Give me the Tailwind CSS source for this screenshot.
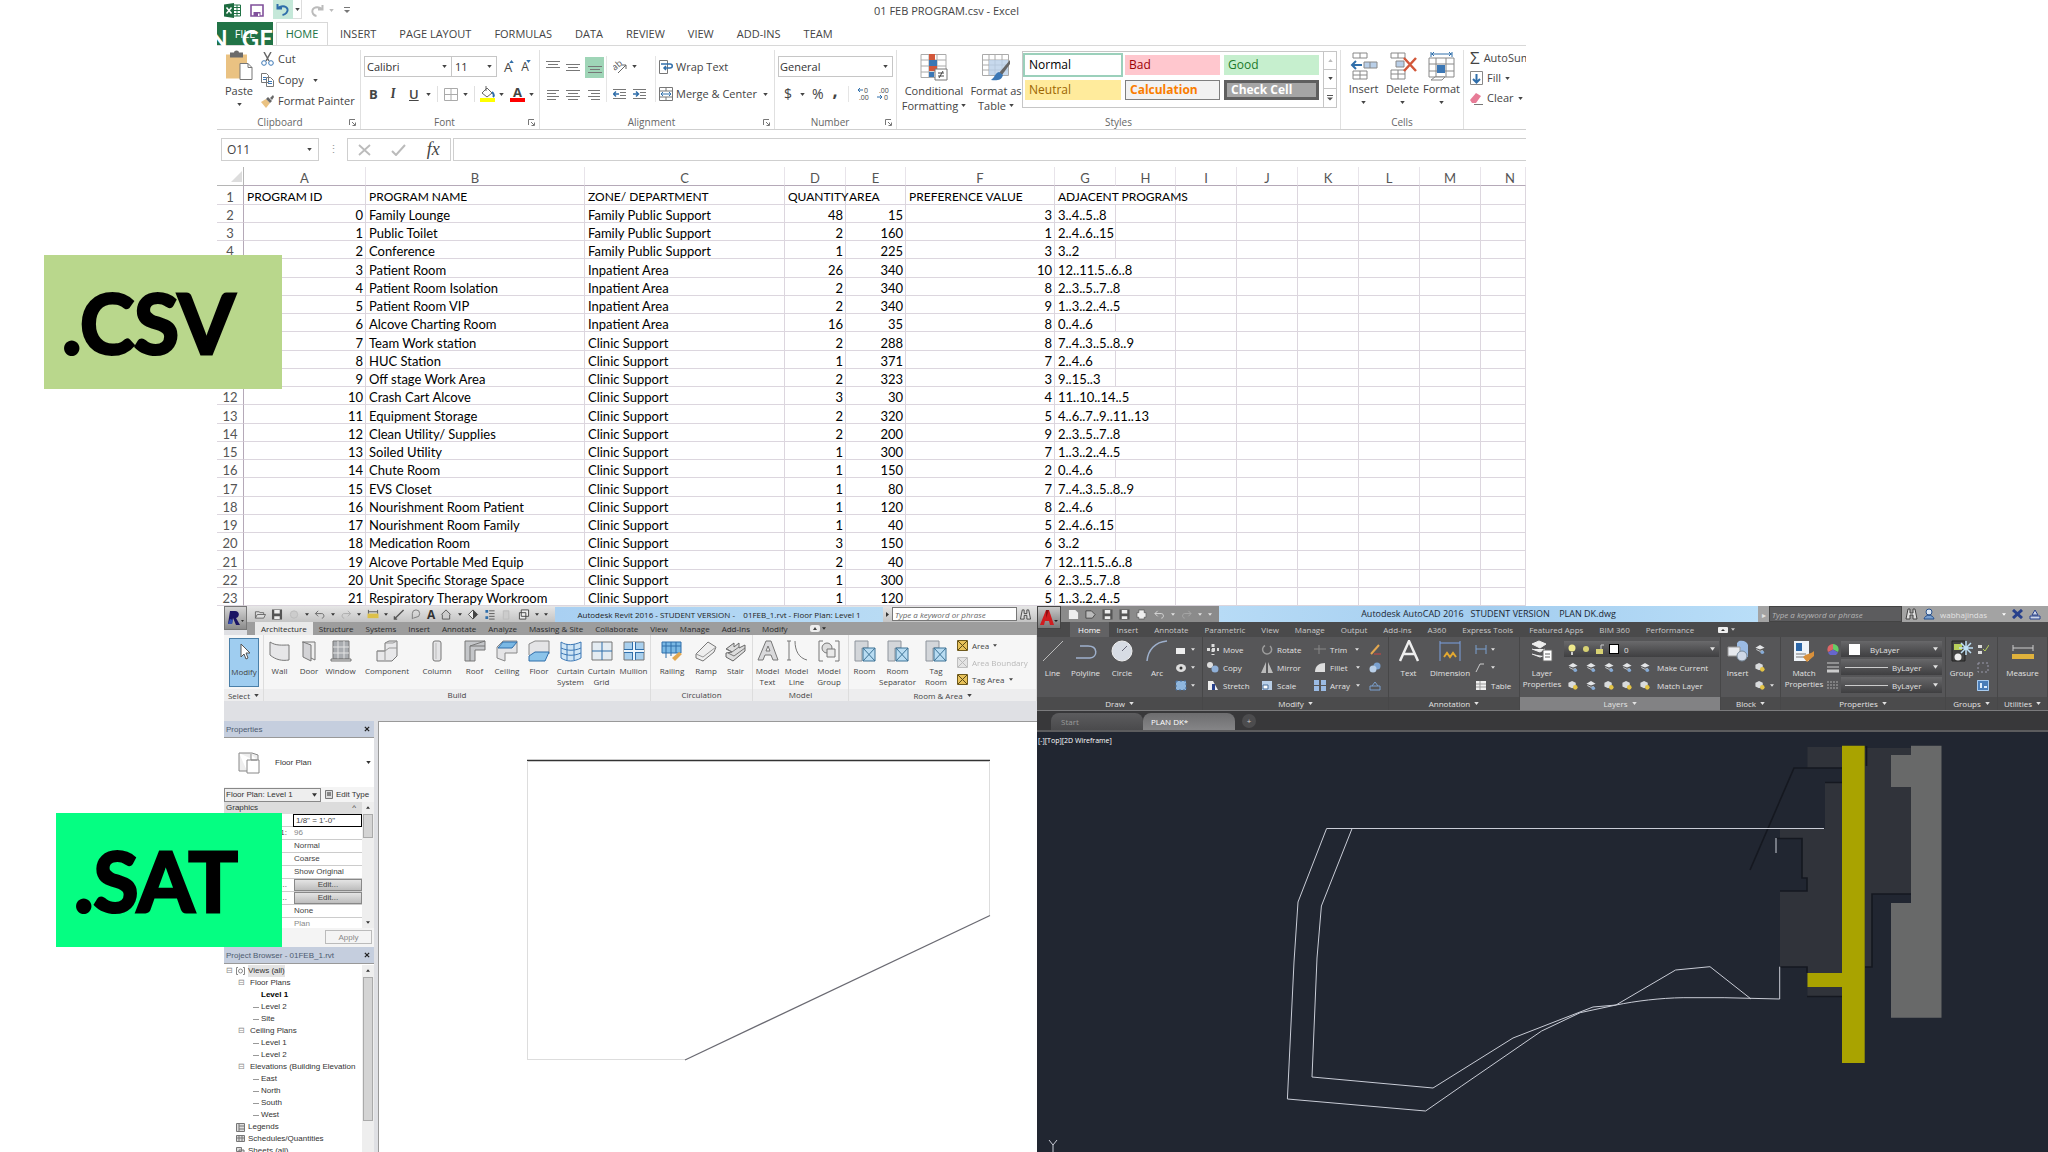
<!DOCTYPE html>
<html lang="en">
<head>
    <meta charset="UTF-8">
    <meta name="viewport" content="width=device-width, initial-scale=1.0">
    <title>Input files</title>
    <script src="https://cdn.jsdelivr.net/npm/@tailwindcss/browser@4"></script>
</head>
<body class="bg-white h-screen overflow-hidden font-['Open_Sans',sans-serif]">

<!-- shared icons -->
<svg class="hidden">
    <symbol id="caret" viewBox="0 0 6 4"><path d="M0 0h6L3 4z" fill="currentColor"/></symbol>
    <symbol id="launch" viewBox="0 0 7 7"><path d="M.5 6V.5H6M3 3l3 3M6.5 3.5v3h-3" fill="none" stroke="#777"/></symbol>
    <symbol id="lines" viewBox="0 0 14 12"><path d="M0 1.5h14M2 4.5h10M0 7.5h14M2 10.5h10" stroke="#777" fill="none"/></symbol>
    <symbol id="left" viewBox="0 0 14 12"><path d="M1 1.5h12M1 4.5h9M1 7.5h12M1 10.5h9" stroke="#777" fill="none"/></symbol>
    <symbol id="right" viewBox="0 0 14 12"><path d="M1 1.5h12M4 4.5h9M1 7.5h12M4 10.5h9" stroke="#777" fill="none"/></symbol>
    <symbol id="three" viewBox="0 0 14 12"><path d="M0 2.5h14M2 5.5h10M0 8.5h14" stroke="#777" fill="none"/></symbol>
    <symbol id="xroom" viewBox="0 0 22 22"><path d="M1 1h13v7H8v13H1z" fill="#d3d6da" stroke="#8e949c"/><path d="M9 8h12v13H9zM9 8l12 13M21 8L9 21" fill="#b9dcf2" stroke="#3d7396"/></symbol>
    <symbol id="xarea" viewBox="0 0 11 11"><path d="M.5.5h10v10H.5z" fill="#e8c25a" stroke="#6f5a1c"/><path d="M1 1l9 9M10 1l-9 9" stroke="#5c4a17"/></symbol>
    <symbol id="layer" viewBox="0 0 12 12"><path d="M1 4l5-3 5 3-5 2z" fill="#e4e6e8"/><path d="M2 6l4 2 3-1" fill="none" stroke="#cfd2d5"/><circle cx="8.500" cy="9" r="2" fill="#86abd6"/></symbol>
    <symbol id="layery" viewBox="0 0 12 12"><path d="M1 3l4-2 4 2v4L5 9 1 7z" fill="#d9dbdd"/><circle cx="8.500" cy="8" r="2.500" fill="#e3c345"/></symbol>
    <symbol id="bino" viewBox="0 0 13 12"><path d="M3 1h2v4h3V1h2l2 10H8V7H5v4H1z" fill="#ddd" stroke="#444"/></symbol>
    <symbol id="disk" viewBox="0 0 12 12"><path d="M.5.5h11v11H.5z" fill="#555"/><path d="M3 1h6v4H3zM3 8h6v3H3z" fill="#eee"/></symbol>
    <symbol id="close" viewBox="0 0 7 7"><path d="M1 1l5 5M6 1L1 6" stroke="#222" stroke-width="1.500"/></symbol>
</svg>

<main class="flex flex-col h-full">

<!-- ================= Excel ================= -->
<section class="ml-[217px] mr-[522px] shrink-0 overflow-hidden text-[11px] text-[#444]">
    <div class="flex items-center h-[22px] relative pl-[7px] pb-[2px]">
        <svg class="w-[17px] h-[15px]" viewBox="0 0 17 15"><path d="M9 2h7.500v11H9z" fill="#fff" stroke="#217346"/><path d="M10 4.500h6M10 7.500h6M10 10.500h6M13 2v11" stroke="#217346"/><path d="M0 1.500L10 0v15L0 13.500z" fill="#1d6b40"/><path d="M2.500 4.500l5 6M7.500 4.500l-5 6" stroke="#fff" stroke-width="1.500"/></svg>
        <svg class="w-[14px] h-[13px] ml-[9px]" viewBox="0 0 14 13"><path d="M1 1h12v11H1z" fill="#fff" stroke="#80509b" stroke-width="1.600"/><path d="M3.500 8h7v4h-7z" fill="#80509b"/><path d="M8 9.500h1.500V12H8z" fill="#fff"/></svg>
        <button class="ml-[9px] w-[20px] h-[19px] self-start bg-[#c5e8d9] flex items-center justify-center" aria-label="Undo"><svg class="w-[14px] h-[13px]" viewBox="0 0 14 13"><path d="M1.500 1v4.500H6M2 5.500C4 2.500 10 2 11.500 6c.8 3-2 5.500-5 6" fill="none" stroke="#2f6eaa" stroke-width="2"/></svg></button>
        <button class="w-[9px] h-[19px] self-start border-r border-b border-[#ddd] flex items-center justify-center" aria-label="Undo list"><svg class="w-[5px] h-[3px]"><use href="#caret"/></svg></button>
        <svg class="w-[14px] h-[13px] ml-[8px]" viewBox="0 0 14 13"><path d="M12.500 1v4.500H8M12 5.500C10 2.500 4 2 2.500 6c-.8 3 1 5.500 4 6" fill="none" stroke="#bbb" stroke-width="2"/></svg>
        <svg class="w-[5px] h-[3px] ml-[5px] text-[#bbb]"><use href="#caret"/></svg>
        <svg class="w-[6px] h-[6px] ml-[10px]" viewBox="0 0 6 6"><path d="M0 .5h6" stroke="#777"/><path d="M0 3h6L3 6z" fill="#777"/></svg>
        <p class="absolute inset-x-0 top-[3px] pl-[150px] text-center leading-4">01 FEB PROGRAM.csv - Excel</p>
    </div>
    <nav class="flex h-[24px] leading-[24px] border-b border-[#d8d8d8] relative">
        <button class="w-[56px] bg-[#217346] text-white">FILE</button>
        <button class="w-[52px] ml-[3px] bg-white border border-b-0 border-[#d8d8d8] text-[#217346] leading-[20px]">HOME</button>
        <div class="flex gap-[23px] ml-[12px] whitespace-nowrap">
            <button>INSERT</button><button>PAGE LAYOUT</button><button>FORMULAS</button><button>DATA</button><button>REVIEW</button><button>VIEW</button><button>ADD-INS</button><button>TEAM</button>
        </div>
        <!-- slide heading running over the green tab -->
        <div class="absolute left-0 top-0 w-[56px] h-[24px] overflow-hidden flex justify-end gap-[14px] text-white font-bold text-[24px] leading-[34px] font-['Lato',sans-serif]"><span>N</span><span>GE</span></div>
    </nav>

    <div class="flex h-[84px] border-b border-[#cfcfcf] pt-1 [&>div]:border-r [&>div]:border-[#e0e0e0] [&>div]:flex [&>div]:flex-col [&>div]:justify-between [&>div]:shrink-0 whitespace-nowrap leading-[14px]">
        <div class="w-[144px]">
            <div class="flex">
                <button class="w-[44px] flex flex-col items-center">
                    <svg class="w-[28px] h-[31px]" viewBox="0 0 28 30"><path d="M1 4h21v24H1z" fill="#eac282"/><path d="M5 2h4a2.500 2 0 0 1 5 0h4v5H5z" fill="#6b6b6b"/><path d="M15 13h8l4 4v12H15z" fill="#fff" stroke="#777"/><path d="M23 13v4h4" fill="none" stroke="#777"/></svg>
                    <span class="mt-[3px]">Paste</span><svg class="w-[5px] h-[3px] mt-[5px]"><use href="#caret"/></svg>
                </button>
                <div class="flex flex-col gap-[7px] pt-[2px]">
                    <button class="flex items-center gap-[4px]"><svg class="w-[13px] h-[14px]" viewBox="0 0 13 14"><path d="M3 0l5 9M10 0L5 9" stroke="#666" stroke-width="1.500"/><circle cx="3" cy="11" r="2.300" fill="none" stroke="#3b77b5"/><circle cx="10" cy="11" r="2.300" fill="none" stroke="#3b77b5"/></svg>Cut</button>
                    <button class="flex items-center gap-[4px]"><svg class="w-[13px] h-[14px]" viewBox="0 0 13 14"><path d="M.5.500h5l2 2v7h-7zM5.500 4.500h4l3 3v6h-7z" fill="#fff" stroke="#777"/><path d="M7 8.500h4M7 10.500h4M2 4.500h3M2 6.500h3" stroke="#3b77b5"/></svg>Copy<svg class="w-[5px] h-[3px] ml-[5px]"><use href="#caret"/></svg></button>
                    <button class="flex items-center gap-[4px]"><svg class="w-[13px] h-[13px]" viewBox="0 0 13 13"><path d="M0 7l5-3 4 4-4 5z" fill="#eac282"/><path d="M5 4l2-2 4 4-2 2zM9 3l3-3 1 2-2 3z" fill="#666"/></svg>Format Painter</button>
                </div>
            </div>
            <p class="text-[10px] text-[#666] flex items-center justify-center"><span class="flex-1 text-center pr-[6px]">Clipboard</span><svg class="w-[7px] h-[7px] mr-[4px]"><use href="#launch"/></svg></p>
        </div>
        <div class="w-[179px]">
            <div class="px-[3px] pt-[6px]">
                <div class="flex items-center">
                    <label class="flex items-center w-[88px] h-[21px] border border-[#c6c6c6] pr-[4px]"><select aria-label="Font" class="appearance-none flex-1 outline-none pl-[2px] text-[#333]"><option>Calibri</option></select><svg class="w-[5px] h-[3px]"><use href="#caret"/></svg></label>
                    <label class="flex items-center w-[45px] h-[21px] border border-l-0 border-[#c6c6c6] pr-[4px]"><select aria-label="Font size" class="appearance-none flex-1 min-w-0 outline-none pl-[3px] text-[#333]"><option>11</option></select><svg class="w-[5px] h-[3px]"><use href="#caret"/></svg></label>
                    <button class="text-[13px] ml-[7px] relative">A<svg class="absolute -right-[2px] top-0 w-[5px] h-[3px] rotate-180 text-[#2f6eaa]"><use href="#caret"/></svg></button>
                    <button class="text-[12px] ml-[9px] relative">A<svg class="absolute -right-[2px] top-0 w-[5px] h-[3px] text-[#2f6eaa]"><use href="#caret"/></svg></button>
                </div>
                <div class="flex items-center mt-[8px] pl-[5px] h-[18px] text-[13px] [&>svg]:shrink-0">
                    <button class="font-bold w-[8px]">B</button><button class="italic font-serif font-bold ml-[12px] w-[8px]">I</button><button class="underline font-semibold ml-[12px] w-[9px]">U</button>
                    <svg class="w-[5px] h-[3px] ml-[8px]"><use href="#caret"/></svg>
                    <i class="w-px h-[16px] bg-[#e0e0e0] ml-[6px]"></i>
                    <svg class="w-[14px] h-[13px] ml-[6px]" viewBox="0 0 14 13"><path d="M.5.500h13v12H.5zM7 0v12M0 6.500h14" fill="none" stroke="#aaa"/></svg>
                    <svg class="w-[5px] h-[3px] ml-[5px]"><use href="#caret"/></svg>
                    <i class="w-px h-[16px] bg-[#e0e0e0] ml-[6px]"></i>
                    <svg class="w-[15px] h-[16px] ml-[5px]" viewBox="0 0 15 16"><path d="M2 7l5-5 5 5-5 4z" fill="#fff" stroke="#666"/><path d="M6 5V0" stroke="#666"/><path d="M12 6c2 2 2 4 1 5" fill="none" stroke="#2f6eaa" stroke-width="2"/><path d="M0 12h15v4H0z" fill="#ff0"/></svg>
                    <svg class="w-[5px] h-[3px] ml-[4px]"><use href="#caret"/></svg>
                    <button class="w-[15px] ml-[6px] border-b-4 border-[#f00] font-bold leading-[12px]">A</button>
                    <svg class="w-[5px] h-[3px] ml-[4px]"><use href="#caret"/></svg>
                </div>
            </div>
            <p class="text-[10px] text-[#666] flex items-center"><span class="flex-1 text-center">Font</span><svg class="w-[7px] h-[7px] mr-[4px]"><use href="#launch"/></svg></p>
        </div>
        <div class="w-[235px]">
            <div class="flex pt-[6px] pl-[6px]">
                <div class="grid grid-cols-[20px_19px_20px] gap-y-[9px] items-center [&_svg]:w-[14px] [&_svg]:h-[12px]">
                    <svg class="mb-[6px]"><use href="#three"/></svg><svg><use href="#three"/></svg><button class="bg-[#9fd5b7] w-[19px] h-[21px] flex items-center justify-center" aria-label="Bottom align"><svg class="mt-[4px]"><use href="#three"/></svg></button>
                    <svg><use href="#left"/></svg><svg><use href="#lines"/></svg><svg class="ml-[2px]"><use href="#right"/></svg>
                </div>
                <div class="border-x border-[#e5e5e5] w-[50px] ml-[1px] px-[6px]">
                    <div class="flex items-center h-[21px]"><svg class="w-[15px] h-[15px]" viewBox="0 0 15 15"><text x="0" y="9" font-size="9" fill="#555" transform="rotate(-40 5 8)">ab</text><path d="M5 14l8-8M13 10V6H9" fill="none" stroke="#666"/></svg><svg class="w-[5px] h-[3px] ml-[4px]"><use href="#caret"/></svg></div>
                    <div class="flex items-center gap-[6px] mt-[9px] h-[16px]">
                        <svg class="w-[14px] h-[12px]" viewBox="0 0 14 12"><path d="M0 1.500h13M7 4.500h6M7 7.500h6M0 10.500h13" stroke="#777"/><path d="M6 6H1M3 3.500L.5 6 3 8.500" fill="none" stroke="#2f6eaa" stroke-width="1.500"/></svg>
                        <svg class="w-[14px] h-[12px]" viewBox="0 0 14 12"><path d="M0 1.500h13M7 4.500h6M7 7.500h6M0 10.500h13" stroke="#777"/><path d="M0 6h5M3 3.500L5.500 6 3 8.500" fill="none" stroke="#2f6eaa" stroke-width="1.500"/></svg>
                    </div>
                </div>
                <div class="pl-[3px]">
                    <button class="flex items-center h-[21px] gap-[3px]"><svg class="w-[14px] h-[14px]" viewBox="0 0 14 14"><path d="M.5.500h8v13h-8z" fill="#fff" stroke="#777"/><path d="M2 4h9c3 0 3 4 0 4H5M7 6L5 8l2 2" fill="none" stroke="#2f6eaa" stroke-width="1.500"/></svg>Wrap Text</button>
                    <button class="flex items-center h-[16px] gap-[3px] mt-[9px]"><svg class="w-[14px] h-[14px]" viewBox="0 0 14 14"><path d="M.5.500h13v13H.5zM0 4h14M0 10h14M7 0v4M7 10v4" fill="#fff" stroke="#777"/><path d="M2 7h10M4 5L2 7l2 2M10 5l2 2-2 2" fill="none" stroke="#2f6eaa"/></svg>Merge &amp; Center<svg class="w-[5px] h-[3px] ml-[3px]"><use href="#caret"/></svg></button>
                </div>
            </div>
            <p class="text-[10px] text-[#666] flex items-center"><span class="flex-1 text-center">Alignment</span><svg class="w-[7px] h-[7px] mr-[4px]"><use href="#launch"/></svg></p>
        </div>
        <div class="w-[122px]">
            <div class="pt-[6px] px-[3px]">
                <label class="flex items-center h-[21px] border border-[#c6c6c6] pr-[4px]"><select aria-label="Number format" class="appearance-none flex-1 outline-none pl-[1px] text-[#333]"><option>General</option></select><svg class="w-[5px] h-[3px]"><use href="#caret"/></svg></label>
                <div class="flex items-center mt-[8px] h-[18px] text-[14px] pl-[6px]">
                    <button>$</button><svg class="w-[5px] h-[3px] ml-[8px]"><use href="#caret"/></svg><button class="ml-[7px]">%</button><button class="ml-[9px] font-bold text-[18px] leading-[10px] pb-[8px]">,</button>
                    <i class="w-px h-[16px] bg-[#e5e5e5] ml-[10px]"></i>
                    <svg class="w-[13px] h-[14px] ml-[8px]" viewBox="0 0 13 14"><path d="M6 3H1M3 1L1 3l2 2" fill="none" stroke="#2f6eaa"/><text x="7" y="6" font-size="7" fill="#444">0</text><text x="2" y="13" font-size="7" fill="#444">.00</text></svg>
                    <svg class="w-[13px] h-[14px] ml-[7px]" viewBox="0 0 13 14"><text x="2" y="6" font-size="7" fill="#444">.00</text><path d="M0 10h5M3 8l2 2-2 2" fill="none" stroke="#2f6eaa"/><text x="7" y="13" font-size="7" fill="#444">0</text></svg>
                </div>
            </div>
            <p class="text-[10px] text-[#666] flex items-center"><span class="flex-1 text-center">Number</span><svg class="w-[7px] h-[7px] mr-[4px]"><use href="#launch"/></svg></p>
        </div>
        <div class="w-[444px]">
            <div class="flex">
                <button class="w-[74px] flex flex-col items-center pt-[4px] leading-[15px]">
                    <svg class="w-[28px] h-[27px] mb-[2px]" viewBox="0 0 28 27"><path d="M1 .5h25v23H1zM1 6h25M1 12h25M1 18h25M9 0v23M17 0v23" fill="#fff" stroke="#aaa"/><path d="M9 0h6v6H9zM9 12h8v5H9z" fill="#d2573a"/><path d="M9 6h8v6H9zM9 18h5v5H9z" fill="#3b77b5"/><path d="M15 15h12v11H15z" fill="#fff" stroke="#777"/><path d="M18 19h6M18 22h6M23 17l-4 7" stroke="#444"/></svg>
                    <span>Conditional</span><span class="flex items-center gap-[3px]">Formatting<svg class="w-[5px] h-[3px]"><use href="#caret"/></svg></span>
                </button>
                <button class="w-[50px] flex flex-col items-center pt-[4px] leading-[15px]">
                    <svg class="w-[28px] h-[27px] mb-[2px]" viewBox="0 0 28 27"><path d="M.5.500h26v21H.5zM0 6h26M0 11h26M0 16h26M7 0v22M13 0v22M20 0v22" fill="#fff" stroke="#aaa"/><path d="M7 6h19v15H7z" fill="#b9cfe8" opacity=".8"/><path d="M28 6L17 19l3 2 8-11z" fill="#666"/><path d="M17 18c-4 1-4 5-8 8 6 1 11 0 12-5z" fill="#3b77b5"/></svg>
                    <span>Format as</span><span class="flex items-center gap-[3px]">Table<svg class="w-[5px] h-[3px]"><use href="#caret"/></svg></span>
                </button>
                <div class="flex ml-[1px] mt-px border border-[#c6c6c6] h-[57px]">
                    <div class="grid grid-cols-[96px_95px_95px] content-start gap-x-[4px] gap-y-[5px] px-[2px] pt-[3px] pr-[4px] text-[12px] [&>button]:text-left [&>button]:pl-[4px] [&>button]:h-[20px] [&>button]:flex [&>button]:items-center">
                        <button class="bg-white text-black outline-2 outline-[#9bd0bb]">Normal</button><button class="bg-[#ffc7ce] text-[#9c0006]">Bad</button><button class="bg-[#c6efce] text-[#217a2a]">Good</button>
                        <button class="bg-[#ffeb9c] text-[#9c6500]">Neutral</button><button class="bg-[#f2f2f2] border border-[#7f7f7f] font-bold text-[#fa7d00]">Calculation</button><button class="bg-[#a5a5a5] border-3 border-[#5f5f5f] font-bold text-white">Check Cell</button>
                    </div>
                    <div class="w-[13px] border-l border-[#c6c6c6] grid grid-rows-3 divide-y divide-[#c6c6c6] [&>button]:flex [&>button]:items-center [&>button]:justify-center">
                        <button class="text-[#bbb]" aria-label="Up"><svg class="w-[5px] h-[3px] rotate-180"><use href="#caret"/></svg></button><button aria-label="Down"><svg class="w-[5px] h-[3px]"><use href="#caret"/></svg></button><button aria-label="More"><svg class="w-[6px] h-[6px]" viewBox="0 0 6 6"><path d="M0 .5h6" stroke="#555"/><path d="M0 2.500h6l-3 3z" fill="#555"/></svg></button>
                    </div>
                </div>
            </div>
            <p class="text-[10px] text-[#666] text-center">Styles</p>
        </div>
        <div class="w-[123px]">
            <div class="flex pt-[2px] pl-[3px] [&>button]:w-[39px] [&>button]:flex [&>button]:flex-col [&>button]:items-center">
                <button><svg class="w-[28px] h-[29px]" viewBox="0 0 28 29"><path d="M3 1h14v5H3zM3 19h14v8H3zM10 1v5M10 19v8M3 23h14" fill="#fff" stroke="#888"/><path d="M14 10h13v6H14zM20 10v6" fill="#b9cfe8" stroke="#888"/><path d="M12 13H2M6 9l-4 4 4 4" fill="none" stroke="#2f6eaa" stroke-width="2"/></svg><span class="mt-[1px]">Insert</span><svg class="w-[5px] h-[3px] mt-[5px]"><use href="#caret"/></svg></button>
                <button><svg class="w-[28px] h-[29px]" viewBox="0 0 28 29"><path d="M2 1h14v5H2zM2 18h14v9H2zM9 1v5M9 18v9M2 22h14" fill="#fff" stroke="#888"/><path d="M7 9h8v6H7z" fill="#b9cfe8" stroke="#888"/><path d="M15 6l12 13M27 6L15 19" stroke="#d2573a" stroke-width="2.500"/></svg><span class="mt-[1px]">Delete</span><svg class="w-[5px] h-[3px] mt-[5px]"><use href="#caret"/></svg></button>
                <button><svg class="w-[28px] h-[29px]" viewBox="0 0 28 29"><path d="M3 2h21M3 0v5M24 0v5M6 0L4 2l2 2M21 0l2 2-2 2" fill="none" stroke="#2f6eaa"/><path d="M1 6h25v19H1zM8 6v19M18 6v19M1 12h25M1 19h25" fill="#fff" stroke="#888"/><path d="M9 13h8v8H9z" fill="#3b77b5"/><path d="M3 28l4-3h10l-3 3z" fill="#fff" stroke="#888"/></svg><span class="mt-[1px]">Format</span><svg class="w-[5px] h-[3px] mt-[5px]"><use href="#caret"/></svg></button>
            </div>
            <p class="text-[10px] text-[#666] text-center">Cells</p>
        </div>
        <div class="flex-1 overflow-hidden !border-r-0">
            <div class="flex flex-col gap-[6px] pt-[1px] pl-[6px]">
                <button class="flex items-center gap-[4px]"><span class="text-[17px] w-[13px]">Σ</span>AutoSum</button>
                <button class="flex items-center gap-[4px]"><svg class="w-[13px] h-[14px]" viewBox="0 0 13 14"><path d="M.5.500h12v13H.5z" fill="#fff" stroke="#888"/><path d="M6.500 3v8M3 8l3.500 3.500L10 8" fill="none" stroke="#2f6eaa" stroke-width="2"/></svg>Fill<svg class="w-[5px] h-[3px]"><use href="#caret"/></svg></button>
                <button class="flex items-center gap-[4px]"><svg class="w-[13px] h-[13px]" viewBox="0 0 13 13"><path d="M0 8l6-7 5 3-5 7H2z" fill="#e77c97"/><path d="M4 12.500h9" stroke="#777"/></svg>Clear<svg class="w-[5px] h-[3px]"><use href="#caret"/></svg></button>
            </div>
        </div>
    </div>

    <div class="flex h-[23px] mt-[8px] pl-[4px]">
        <label class="flex items-center w-[98px] border border-[#cfcfcf] pr-[6px]"><input aria-label="Name box" value="O11" class="flex-1 min-w-0 pl-[5px] outline-none text-[12px]"><svg class="w-[5px] h-[3px]"><use href="#caret"/></svg></label>
        <span class="w-[28px] text-center leading-[21px] text-[#999]">⋮</span>
        <div class="w-[104px] border border-[#cfcfcf] flex items-center justify-around">
            <svg class="w-[13px] h-[12px]" viewBox="0 0 13 12"><path d="M1 1l11 10M12 1L1 11" stroke="#bbb" stroke-width="1.800"/></svg>
            <svg class="w-[15px] h-[12px]" viewBox="0 0 15 12"><path d="M1 7l4 4 9-10" fill="none" stroke="#bbb" stroke-width="2"/></svg>
            <i class="font-['Liberation_Serif',serif] text-[18px] text-[#444]">fx</i>
        </div>
        <input aria-label="Formula" class="flex-1 ml-[2px] border border-r-0 border-[#cfcfcf] outline-none">
    </div>

    <table class="mt-[6px] w-full table-fixed border-separate border-spacing-0 font-['Lato',sans-serif] text-[13px] leading-[14px] text-black">
        <colgroup><col class="w-[27px]"><col class="w-[122px]"><col class="w-[219px]"><col class="w-[200px]"><col class="w-[61px]"><col class="w-[60px]"><col class="w-[149px]"><col class="w-[61px]"><col class="w-[60px]"><col class="w-[61px]"><col class="w-[61px]"><col class="w-[61px]"><col class="w-[61px]"><col class="w-[61px]"><col></colgroup>
        <thead><tr id="letters" class="h-[19px] [&>th:last-child]:pl-[14px]"></tr></thead>
        <tbody id="rows" class="[&>tr]:h-[18px] [&>tr:nth-child(4n+1)]:h-[19px] [&>tr:nth-child(21)]:h-[18px] [&>tr:first-child>td]:text-[12px] whitespace-nowrap"></tbody>
    </table>
</section>

<div class="flex flex-1 min-h-0 ml-[224px]">

<!-- ================= Revit ================= -->
<section class="w-[813px] shrink-0 flex flex-col min-h-0 overflow-hidden bg-[#dfe0e4] text-[8px] leading-[11px] text-[#333]">
    <div class="flex h-[29px] shrink-0">
        <button class="w-[23px] h-[24px] bg-gradient-to-b from-[#d5d5d5] to-[#8c8c8c] border border-[#777] flex items-center" aria-label="Revit menu"><svg class="w-[20px] h-[20px]" viewBox="0 0 20 20"><path d="M3 16L5 3h5c5 0 5 6 1 7l4 7h-4L8 10 7 16z" fill="#1b1464"/><path d="M3 16l2-5 3 1-1 4z" fill="#334db0"/><path d="M16 12h3l-1.500 2z" fill="#333"/></svg></button>
        <div class="flex-1 flex flex-col">
            <div class="flex items-center h-[16px] bg-gradient-to-b from-[#e6e6e6] to-[#c4c4c4]">
                <div class="w-[308px] flex items-center justify-around px-[4px] [&>svg]:h-[11px] [&>svg]:w-[12px] [&>.c]:w-[4px] [&>.c]:h-[3px]">
                    <svg viewBox="0 0 12 12"><path d="M1 10V3h4l1 1h4v2M1 10l2-4h9l-2 4z" fill="#ddd" stroke="#666"/></svg>
                    <svg><use href="#disk"/></svg>
                    <svg viewBox="0 0 12 12"><circle cx="6" cy="6" r="4" fill="#ccc" stroke="#bbb"/></svg><svg class="c"><use href="#caret"/></svg>
                    <svg viewBox="0 0 12 12"><path d="M4 2L1 5l3 3M1 5h7c3 0 3 5 0 5" fill="none" stroke="#666"/></svg><svg class="c"><use href="#caret"/></svg>
                    <svg viewBox="0 0 12 12"><path d="M8 2l3 3-3 3M11 5H4c-3 0-3 5 0 5" fill="none" stroke="#aaa"/></svg><svg class="c"><use href="#caret"/></svg>
                    <svg viewBox="0 0 12 12"><path d="M0 5h12v5H0z" fill="#dcc04a"/><path d="M1 1v4M11 1v4M1 3h10" stroke="#555"/></svg><svg class="c"><use href="#caret"/></svg>
                    <svg viewBox="0 0 12 12"><path d="M1 11L11 1M1 8v3h3" fill="none" stroke="#555" stroke-width="1.500"/></svg>
                    <svg viewBox="0 0 12 12"><path d="M2 11V5a4 4 0 1 1 4 4l-3 1" fill="none" stroke="#777"/></svg>
                    <b class="text-[12px]">A</b>
                    <svg viewBox="0 0 12 12"><path d="M1 6l5-5 5 5M2 6v5h8V6" fill="#ccc" stroke="#555"/></svg><svg class="c"><use href="#caret"/></svg>
                    <svg viewBox="0 0 12 12"><path d="M6 1l5 5-5 5-5-5z" fill="#eee" stroke="#444"/><path d="M6 1l5 5-5 5z" fill="#444"/></svg>
                    <svg viewBox="0 0 12 12"><path d="M1 1h3v3H1zM1 8h3v3H1z" fill="#2f6eaa"/><path d="M5 2h6M5 5h6M5 8h6M5 11h6" stroke="#555"/></svg>
                    <svg viewBox="0 0 12 12"><path d="M2 2h6v9H2z" fill="#ccc" stroke="#bbb"/></svg>
                    <svg viewBox="0 0 12 12"><path d="M3 1h8v7H3zM1 4h7v7H1z" fill="#eee" stroke="#444"/></svg><svg class="c"><use href="#caret"/></svg>
                    <svg class="c"><use href="#caret"/></svg>
                </div>
                <p class="w-[328px] h-[15px] leading-[15px] bg-gradient-to-r from-[#a9d0f2] to-[#b8dbf4] text-center text-[#222] whitespace-pre">Autodesk Revit 2016 - STUDENT VERSION -    01FEB_1.rvt - Floor Plan: Level 1</p>
                <svg class="w-[3px] h-[5px] ml-[3px]" viewBox="0 0 3 5"><path d="M0 0l3 2.500L0 5z" fill="#333"/></svg>
                <input aria-label="Search" placeholder="Type a keyword or phrase" class="ml-[3px] w-[125px] h-[14px] bg-white border border-[#777] px-[2px] italic placeholder:text-[#666] outline-none">
                <svg class="w-[13px] h-[11px] ml-[2px]"><use href="#bino"/></svg>
            </div>
            <nav class="flex h-[13px] bg-[#9d9d9d] text-[#2b2b2b] pl-[8px] [&>button]:px-[6px] whitespace-nowrap leading-[13px]">
                <button class="bg-[#e9e9e9]">Architecture</button><button>Structure</button><button>Systems</button><button>Insert</button><button>Annotate</button><button>Analyze</button><button>Massing &amp; Site</button><button>Collaborate</button><button>View</button><button>Manage</button><button>Add-Ins</button><button>Modify</button>
                <button class="flex items-center gap-[2px] ml-[10px]" aria-label="Collapse"><svg class="w-[10px] h-[7px]" viewBox="0 0 10 7"><rect width="10" height="7" rx="2" fill="#eee"/><path d="M3 5l2-3 2 3z" fill="#444"/></svg><svg class="w-[4px] h-[3px]"><use href="#caret"/></svg></button>
            </nav>
        </div>
    </div>

    <!-- ribbon -->
    <div class="flex h-[66px] shrink-0 bg-[#f6f6f6] text-center text-[#444] [&>div]:flex [&>div]:flex-col [&>div]:justify-between [&>div]:border-r [&>div]:border-[#ddd] [&_button]:flex [&_button]:flex-col [&_button]:items-center [&_button_svg]:w-[22px] [&_button_svg]:h-[22px] [&_button_svg]:mb-[3px] [&_p]:h-[12px] [&_p]:bg-[#ededee] [&_button]:h-[50px] [&_button]:pt-[2px]">
        <div class="w-[40px]">
            <div class="pl-[5px] pt-[3px]"><button class="w-[30px] !h-[49px] bg-[#9fcdf0] border border-[#4a7fa8]"><svg viewBox="0 0 22 22"><path d="M8 3v13l3-3 2 5 2-1-2-5h4z" fill="#fff" stroke="#555"/></svg>Modify</button></div>
            <p class="flex items-center justify-center gap-[4px]">Select<svg class="w-[5px] h-[3px]"><use href="#caret"/></svg></p>
        </div>
        <div class="w-[387px]">
            <div class="flex pt-[3px] [&>button]:shrink-0">
                <button class="w-[31px]"><svg viewBox="0 0 22 22"><path d="M1 2c6 4 12 3 19 3v15c-7 1-13 0-19-5z" fill="#e6e6e8" stroke="#777"/></svg>Wall</button>
                <button class="w-[28px]"><svg viewBox="0 0 22 22"><path d="M4 2h13v18l-4-2" fill="#eee" stroke="#777"/><path d="M5 2l8 3v16l-8-4z" fill="#d3d3d6" stroke="#777"/></svg>Door</button>
                <button class="w-[35px]"><svg viewBox="0 0 22 22"><path d="M3 1h16v18H3z" fill="#a9acb0" stroke="#777"/><path d="M3 7h16M3 13h16M8 1v18M14 1v18" stroke="#e4e4e4"/><path d="M1 19h20v2H1z" fill="#ddd" stroke="#777"/></svg>Window</button>
                <button class="w-[58px]"><svg viewBox="0 0 22 22"><path d="M1 11h8V3l4-2h8v15l-5 5H1z" fill="#e8e8ea" stroke="#777"/><path d="M1 11h8l4-3h8M9 11v9M9 3h8l4-2" fill="none" stroke="#999"/></svg>Component</button>
                <button class="w-[42px]"><svg viewBox="0 0 22 22"><rect x="7" y="1" width="8" height="20" rx="2" fill="#e4e4e6" stroke="#777"/><path d="M10 3v16" stroke="#bbb"/></svg>Column</button>
                <button class="w-[33px]"><svg viewBox="0 0 22 22"><path d="M1 1h20v9H11v11H1z" fill="#c4c6c9" stroke="#777"/><path d="M21 1L6 6v15M6 6h15" fill="none" stroke="#777"/></svg>Roof</button>
                <button class="w-[32px]"><svg viewBox="0 0 22 22"><path d="M1 7l6-6h14v12H9v8l-8-3z" fill="#e4e4e6" stroke="#888"/><path d="M2 8l5-6h14l-5 6z" fill="#7ab8e4" stroke="#2f6eaa"/></svg>Ceiling</button>
                <button class="w-[32px]"><svg viewBox="0 0 22 22"><path d="M1 15V4l6-3h14v13" fill="#e4e4e6" stroke="#888"/><path d="M1 16l6-4h14l-4 9H1z" fill="#8cc4ea" stroke="#2f6eaa"/></svg>Floor</button>
                <button class="w-[31px]"><svg viewBox="0 0 22 22"><path d="M1 2c6 4 13 3 20 0v16c-7 4-14 4-20 0z" fill="#cfe5f5" stroke="#3b77b5"/><path d="M1 8c7 3 13 3 20 0M1 13c7 3 13 3 20 0M7 4v16M14 4v16" fill="none" stroke="#3b77b5"/></svg>Curtain System</button>
                <button class="w-[31px]"><svg viewBox="0 0 22 22"><path d="M1 2h20v18H1z" fill="#e4ecf2" stroke="#777"/><path d="M11 2v18M1 11h20" stroke="#2f6eaa"/></svg>Curtain Grid</button>
                <button class="w-[33px]"><svg viewBox="0 0 22 22"><path d="M1 2h20v18H1z" fill="#a9d0ee" stroke="#777"/><path d="M11 2v18M1 11h20" stroke="#2f6eaa" stroke-width="4"/><path d="M11 2v18M1 11h20" stroke="#eef6fc" stroke-width="2"/></svg>Mullion</button>
            </div>
            <p>Build</p>
        </div>
        <div class="w-[102px]">
            <div class="flex pt-[3px] pl-[1px]">
                <button class="w-[40px]"><svg viewBox="0 0 22 22"><path d="M1 2h19v11H1z" fill="#7ab8e4" stroke="#2f6eaa"/><path d="M1 6h19M5 2v16M10 2v14M15 2v11" stroke="#2f6eaa"/><path d="M11 18l7-6 3 2-7 7z" fill="#e3a850"/></svg>Railing</button>
                <button class="w-[28px]"><svg viewBox="0 0 22 22"><path d="M1 14L13 2l8 5-2 5L8 21l-7-3z" fill="#eee" stroke="#777"/><path d="M1 14l7 3L21 7" fill="none" stroke="#999"/></svg>Ramp</button>
                <button class="w-[31px]"><svg viewBox="0 0 22 22"><path d="M1 9l8-6v4l5-4v5l6-3v6L8 21l-7-4v-4l6-1z" fill="#ddd" stroke="#666"/><path d="M3 13l6 3 11-8M2 9l5 3 7-5" fill="none" stroke="#777"/></svg>Stair</button>
            </div>
            <p>Circulation</p>
        </div>
        <div class="w-[96px]">
            <div class="flex pt-[3px]">
                <button class="w-[29px]"><svg viewBox="0 0 22 22"><path d="M1 20L9 1h5l7 19h-5l-2-5H8l-2 5zM9 11h4l-2-5z" fill="#d9d9db" stroke="#777"/></svg>Model Text</button>
                <button class="w-[29px]"><svg viewBox="0 0 22 22"><path d="M3 1v19M9 1c0 10 4 17 12 19" fill="none" stroke="#777"/><path d="M1 1h4M1 20h4" stroke="#777"/></svg>Model Line</button>
                <button class="w-[36px]"><svg viewBox="0 0 22 22"><path d="M5 1H1v20h4M17 1h4v20h-4" fill="none" stroke="#777"/><circle cx="9" cy="8" r="5" fill="#ddd" stroke="#777"/><path d="M9 9h8v8H9z" fill="#e9e9e9" stroke="#777"/></svg>Model Group</button>
            </div>
            <p>Model</p>
        </div>
        <div class="flex-1">
            <div class="flex pt-[3px]">
                <button class="w-[31px]"><svg><use href="#xroom"/></svg>Room</button>
                <button class="w-[35px]"><svg><use href="#xroom"/></svg>Room Separator</button>
                <button class="w-[42px] px-[8px]"><svg><use href="#xroom"/></svg>Tag Room</button>
                <div class="flex flex-col gap-[6px] pt-[2px] text-left [&>span]:flex [&>span]:items-center [&>span]:gap-[4px] [&_svg]:w-[11px] [&_svg]:h-[11px]">
                    <span><svg><use href="#xarea"/></svg>Area<svg class="!w-[4px] !h-[3px]"><use href="#caret"/></svg></span>
                    <span class="opacity-35 whitespace-nowrap"><svg class="grayscale"><use href="#xarea"/></svg>Area Boundary</span>
                    <span><svg><use href="#xarea"/></svg>Tag Area<svg class="!w-[4px] !h-[3px]"><use href="#caret"/></svg></span>
                </div>
            </div>
            <p class="flex items-center justify-center gap-[4px]">Room &amp; Area<svg class="w-[5px] h-[3px]"><use href="#caret"/></svg></p>
        </div>
    </div>

    <div class="flex flex-1 min-h-0 pt-[20px]">
        <aside class="w-[150px] shrink-0 font-['Liberation_Sans',sans-serif] bg-[#f4f4f4]">
            <h2 class="flex items-center justify-between h-[16px] px-[2px] pr-[4px] bg-[#c5cede] text-[#4d5b70]">Properties<svg class="w-[6px] h-[6px]"><use href="#close"/></svg></h2>
            <div class="flex items-center h-[50px] bg-white border-t border-[#999]">
                <svg class="w-[22px] h-[22px] ml-[14px]" viewBox="0 0 22 22"><path d="M1 1h13l6 2v7M1 1v18h8" fill="#eee" stroke="#888"/><path d="M9 8h12v13H9zM13 2v6h6" fill="#fff" stroke="#888"/></svg>
                <span class="ml-[15px] flex-1">Floor Plan</span><svg class="w-[5px] h-[3px] mr-[3px]"><use href="#caret"/></svg>
            </div>
            <div class="flex items-center h-[15px]">
                <label class="flex items-center w-[97px] h-[14px] border border-[#888] bg-[#eee] pr-[3px]"><select aria-label="View" class="appearance-none flex-1 outline-none pl-[1px]"><option>Floor Plan: Level 1</option></select><svg class="w-[5px] h-[4px]"><use href="#caret"/></svg></label>
                <button class="flex items-center gap-[3px] ml-[4px]"><svg class="w-[8px] h-[9px]" viewBox="0 0 8 9"><path d="M.5.500h7v8h-7z" fill="#ddd" stroke="#777"/><path d="M2 3h4M2 5h4" stroke="#333"/></svg>Edit Type</button>
            </div>
            <div class="flex h-[126px]">
                <div class="flex-1 overflow-hidden">
                    <h3 class="h-[12px] bg-[#dcdcdc] flex justify-between px-[2px] pr-[6px]">Graphics<span>^</span></h3>
                    <dl class="grid grid-cols-[69px_1fr] bg-white [&>*]:h-[13px] [&>*]:border-b [&>*]:border-[#ccc] [&>*]:leading-[12px] [&>dd]:pl-[1px] [&>dt]:text-right [&>dt]:pr-[6px] text-[#444]">
                        <dt></dt><dd class="border !border-black"><input aria-label="View scale" value="1/8&quot; = 1'-0&quot;" class="w-full outline-none pl-[1px] leading-[11px] block"></dd>
                        <dt>1:</dt><dd class="text-[#888]">96</dd>
                        <dt></dt><dd>Normal</dd>
                        <dt></dt><dd>Coarse</dd>
                        <dt></dt><dd>Show Original</dd>
                        <dt>h...</dt><dd><button class="w-full h-[12px] border border-[#888] bg-gradient-to-b from-[#e4e4e4] to-[#bdbdbd] block leading-[10px]">Edit...</button></dd>
                        <dt>y...</dt><dd><button class="w-full h-[12px] border border-[#888] bg-gradient-to-b from-[#e4e4e4] to-[#bdbdbd] block leading-[10px]">Edit...</button></dd>
                        <dt></dt><dd>None</dd>
                        <dt></dt><dd class="text-[#888]">Plan</dd>
                    </dl>
                </div>
                <div class="w-[12px] bg-[#eee] flex flex-col items-center py-[4px]"><svg class="w-[4px] h-[3px] rotate-180"><use href="#caret"/></svg><i class="w-[10px] h-[24px] mt-[5px] bg-[#d4d4d4] border border-[#aaa]"></i><svg class="w-[4px] h-[3px] mt-auto"><use href="#caret"/></svg></div>
            </div>
            <div class="flex justify-end h-[19px] pt-[2px] pr-[2px]"><button class="w-[47px] h-[14px] border border-[#bbb] text-[#888]">Apply</button></div>
            <h2 class="flex items-center justify-between h-[16px] px-[2px] pr-[4px] bg-[#c5cede] text-[#4d5b70]">Project Browser - 01FEB_1.rvt<svg class="w-[6px] h-[6px]"><use href="#close"/></svg></h2>
            <div class="flex bg-white border-t border-[#999] pt-px">
                <ul class="flex-1 overflow-hidden whitespace-nowrap [&>li]:h-[12px] [&>li]:leading-[12px] [&>li]:flex [&>li]:items-center">
                    <li class="pl-[2px] gap-[3px]"><span class="text-[#888]">⊟</span><svg class="w-[9px] h-[8px]" viewBox="0 0 9 8"><path d="M2 .5H.5v7H2M7 .5h1.500v7H7" fill="none" stroke="#888"/><circle cx="4.500" cy="4" r="2" fill="none" stroke="#888"/></svg><span class="bg-[#e3e3e3]">Views (all)</span></li>
                    <li class="pl-[14px] gap-[5px]"><span class="text-[#888]">⊟</span>Floor Plans</li>
                    <li class="pl-[37px] font-bold text-black">Level 1</li>
                    <li class="pl-[29px] gap-[2px]"><i class="w-[6px] h-px bg-[#999]"></i>Level 2</li>
                    <li class="pl-[29px] gap-[2px]"><i class="w-[6px] h-px bg-[#999]"></i>Site</li>
                    <li class="pl-[14px] gap-[5px]"><span class="text-[#888]">⊟</span>Ceiling Plans</li>
                    <li class="pl-[29px] gap-[2px]"><i class="w-[6px] h-px bg-[#999]"></i>Level 1</li>
                    <li class="pl-[29px] gap-[2px]"><i class="w-[6px] h-px bg-[#999]"></i>Level 2</li>
                    <li class="pl-[14px] gap-[5px]"><span class="text-[#888]">⊟</span>Elevations (Building Elevation</li>
                    <li class="pl-[29px] gap-[2px]"><i class="w-[6px] h-px bg-[#999]"></i>East</li>
                    <li class="pl-[29px] gap-[2px]"><i class="w-[6px] h-px bg-[#999]"></i>North</li>
                    <li class="pl-[29px] gap-[2px]"><i class="w-[6px] h-px bg-[#999]"></i>South</li>
                    <li class="pl-[29px] gap-[2px]"><i class="w-[6px] h-px bg-[#999]"></i>West</li>
                    <li class="pl-[12px] gap-[3px]"><svg class="w-[9px] h-[9px]" viewBox="0 0 9 9"><path d="M.5.500h8v8h-8zM3 0v9M3 3h6M3 6h6" fill="#ddd" stroke="#777"/></svg>Legends</li>
                    <li class="pl-[12px] gap-[3px]"><svg class="w-[9px] h-[8px]" viewBox="0 0 9 8"><path d="M.5.500h8v6h-8zM3 0v7M6 0v7M0 3h9" fill="#ddd" stroke="#777"/></svg>Schedules/Quantities</li>
                    <li class="pl-[12px] gap-[3px]"><svg class="w-[9px] h-[8px]" viewBox="0 0 9 8"><path d="M.5.500h5v4h-5zM3 3h5v4H3z" fill="#ddd" stroke="#777"/></svg>Sheets (all)</li>
                </ul>
                <div class="w-[12px] flex flex-col items-center pt-[4px] bg-[#eee]"><svg class="w-[4px] h-[3px] rotate-180"><use href="#caret"/></svg><i class="w-[10px] h-[144px] mt-[5px] bg-[#d4d4d4] border border-[#aaa]"></i></div>
            </div>
        </aside>
        <div class="flex-1 ml-[4px] bg-white border-t border-l border-[#999] min-w-0">
            <svg class="block w-full" viewBox="379 721 658 431" fill="none">
                <path d="M527 759.500h463" stroke="#333" stroke-width="1.300"/>
                <path d="M527.500 760v299M989.500 760v154M527 1058.500h158" stroke="#ddd"/>
                <path d="M685 1059L990 914.500" stroke="#6a6a72" stroke-width="1.300"/>
            </svg>
        </div>
    </div>
</section>

<!-- ================= AutoCAD ================= -->
<section class="flex-1 min-w-0 flex flex-col overflow-hidden bg-[#212631] text-[8px] leading-[11px] text-[#e2e2e2]">
    <div class="flex h-[31px] shrink-0 bg-[#4a4a4b]">
        <button class="w-[24px] h-[23px] shrink-0 bg-gradient-to-b from-[#c9c9c9] to-[#777] border border-[#444] flex items-center" aria-label="AutoCAD menu"><svg class="w-[20px] h-[18px]" viewBox="0 0 20 18"><path d="M2 16L8 1h3l5 15h-4l-1-4H7l-1 4z" fill="#d01c1f"/><path d="M8 1h3l-3 8z" fill="#8d0f12"/><path d="M16 11h4l-2 2z" fill="#222"/></svg></button>
        <div class="flex-1 flex flex-col min-w-0">
            <div class="flex items-center h-[16px] bg-[#a3a3a3] whitespace-nowrap">
                <div class="w-[158px] h-full shrink-0 bg-[#8b8b8b] flex items-center justify-around px-[4px] [&>svg]:w-[11px] [&>svg]:h-[11px] [&>.c]:w-[4px] [&>.c]:h-[3px]">
                    <svg viewBox="0 0 12 12"><path d="M1 1h7l3 3v7H1z" fill="#eee"/></svg>
                    <svg viewBox="0 0 12 12"><path d="M1 2h6l4 4-3 4H1z" fill="#bbb" stroke="#444"/></svg>
                    <svg><use href="#disk"/></svg><svg><use href="#disk"/></svg>
                    <svg viewBox="0 0 12 12"><path d="M3 1h6v3h2v5H9v2H3V9H1V4h2z" fill="#eee" stroke="#666"/></svg>
                    <svg viewBox="0 0 12 12"><path d="M4 2L1 5l3 3M1 5h7c3 0 3 5 0 5" fill="none" stroke="#ddd"/></svg><svg class="c"><use href="#caret"/></svg>
                    <svg viewBox="0 0 12 12"><path d="M8 2l3 3-3 3M11 5H4c-3 0-3 5 0 5" fill="none" stroke="#aaa"/></svg><svg class="c"><use href="#caret"/></svg><svg class="c"><use href="#caret"/></svg>
                </div>
                <p class="flex-1 h-full text-[9px] leading-[16px] bg-gradient-to-r from-[#b7dbf6] via-[#a3cdef] to-[#b9def8] text-[#1c2732] text-center whitespace-pre">Autodesk AutoCAD 2016   STUDENT VERSION    PLAN DK.dwg</p>
                <span class="w-[11px] text-center">▸</span>
                <input aria-label="Search" placeholder="Type a keyword or phrase" class="w-[133px] h-full bg-[#5c5c5e] border border-[#444] px-[2px] italic placeholder:text-[#b5b5b5] outline-none">
                <svg class="w-[13px] h-[12px] ml-[3px]"><use href="#bino"/></svg>
                <svg class="w-[12px] h-[12px] ml-[5px]" viewBox="0 0 12 12"><circle cx="6" cy="4" r="3" fill="#dde8f4" stroke="#27508c"/><path d="M1 11c1-5 9-5 10 0z" fill="#7aa0cf" stroke="#27508c"/></svg>
                <a href="#" class="ml-[5px] w-[62px]">wabhajindas</a><svg class="w-[4px] h-[3px] text-white"><use href="#caret"/></svg>
                <svg class="w-[11px] h-[10px] ml-[6px]" viewBox="0 0 11 10"><path d="M1 1l9 8M10 1L1 9" stroke="#27408c" stroke-width="3"/></svg>
                <svg class="w-[12px] h-[11px] ml-[6px] mr-[7px]" viewBox="0 0 12 11"><path d="M6 1l3 5H3zM1 7h10v3H1z" fill="#ccd6ea" stroke="#27408c"/></svg>
            </div>
            <nav class="flex h-[15px] text-[#c9c9c9] pl-[9px] [&>button]:px-[8px] whitespace-nowrap leading-[15px]">
                <button class="bg-[#626264] text-white">Home</button><button>Insert</button><button>Annotate</button><button>Parametric</button><button>View</button><button>Manage</button><button>Output</button><button>Add-ins</button><button>A360</button><button>Express Tools</button><button>Featured Apps</button><button>BIM 360</button><button>Performance</button>
                <button class="flex items-center gap-[3px] ml-[8px]" aria-label="Minimize"><svg class="w-[10px] h-[6px]" viewBox="0 0 10 6"><rect width="10" height="6" rx="1" fill="#eee"/><path d="M3 4l2-2 2 2z" fill="#333"/></svg><svg class="w-[4px] h-[3px]"><use href="#caret"/></svg></button>
            </nav>
        </div>
    </div>

    <div class="flex h-[74px] shrink-0 bg-[#565658] border-b border-[#7b7b7d] whitespace-nowrap [&>div]:shrink-0 [&>div]:flex [&>div]:flex-col [&>div]:justify-between [&>div]:border-r [&>div]:border-[#474748] [&_p]:h-[13px] [&_p]:bg-[#4b4b4c] [&_p]:flex [&_p]:items-center [&_p]:justify-center [&_p]:gap-[4px] [&_p>svg]:w-[5px] [&_p>svg]:h-[3px] [&_.b]:flex [&_.b]:flex-col [&_.b]:items-center [&_.b]:gap-[5px] [&_.b>svg]:w-[22px] [&_.b>svg]:h-[22px] [&_.s]:flex [&_.s]:items-center [&_.s]:h-[18px] [&_.s]:gap-[4px] [&_.s>svg]:w-[12px] [&_.s>svg]:h-[11px] [&_.s>.c]:w-[4px] [&_.s>.c]:h-[3px]">
        <div class="w-[166px]">
            <div class="flex pt-[3px]">
                <button class="b w-[31px]"><svg viewBox="0 0 22 22"><path d="M1 21L21 1" stroke="#bbb"/></svg>Line</button>
                <button class="b w-[35px]"><svg viewBox="0 0 22 22"><path d="M1 18h14c8-1 8-12-2-12H5" fill="none" stroke="#9eb0cc" stroke-width="1.500"/></svg>Polyline</button>
                <button class="b w-[38px]"><svg viewBox="0 0 22 22"><circle cx="11" cy="11" r="10" fill="#d7dce4" stroke="#eee"/><path d="M11 11l5-5" stroke="#667"/></svg>Circle</button>
                <button class="b w-[32px]"><svg viewBox="0 0 22 22"><path d="M1 21C2 10 9 2 21 1" fill="none" stroke="#9eb0cc" stroke-width="1.500"/></svg>Arc</button>
                <div class="pl-[2px]">
                    <span class="s"><svg viewBox="0 0 12 11"><path d="M1 4h9v6H1z" fill="#eee"/></svg><svg class="c"><use href="#caret"/></svg></span>
                    <span class="s"><svg viewBox="0 0 12 11"><ellipse cx="6" cy="6" rx="5" ry="4" fill="#ddd"/><circle cx="6" cy="6" r="1.500" fill="#333"/></svg><svg class="c"><use href="#caret"/></svg></span>
                    <span class="s"><svg viewBox="0 0 12 11"><path d="M1 1h10v9H1z" fill="#8fb6dd" stroke="#466d99" stroke-dasharray="2"/></svg><svg class="c"><use href="#caret"/></svg></span>
                </div>
            </div>
            <p>Draw<svg><use href="#caret"/></svg></p>
        </div>
        <div class="w-[186px]">
            <div class="grid grid-cols-[54px_53px_55px_1fr] pt-[3px] pl-[4px]">
                <button class="s"><svg viewBox="0 0 12 11"><path d="M6 0v11M0 5.500h12" stroke="#ddd" stroke-width="3" stroke-dasharray="3 2"/></svg>Move</button><button class="s"><svg viewBox="0 0 12 11"><path d="M9 2a4.500 4.500 0 1 1-5-.5" fill="none" stroke="#9b9b9b" stroke-width="1.500"/></svg>Rotate</button><button class="s"><svg viewBox="0 0 12 11"><path d="M0 5h12M5 1v9" stroke="#888"/></svg>Trim<svg class="c ml-[4px]"><use href="#caret"/></svg></button><span class="s"><svg viewBox="0 0 12 11"><path d="M2 10L10 1" stroke="#e3a850" stroke-width="2"/><path d="M5 10h7" stroke="#c44"/></svg></span>
                <button class="s"><svg viewBox="0 0 12 11"><circle cx="3" cy="3" r="3" fill="#ddd"/><circle cx="8" cy="7" r="3.500" fill="#8fb0d8"/></svg>Copy</button><button class="s"><svg viewBox="0 0 12 11"><path d="M5 0v11H0zM7 0v11h5z" fill="#bbb"/></svg>Mirror</button><button class="s"><svg viewBox="0 0 12 11"><path d="M1 10c0-6 4-9 10-9v9z" fill="#ddd"/></svg>Fillet<svg class="c ml-[4px]"><use href="#caret"/></svg></button><span class="s"><svg viewBox="0 0 12 11"><circle cx="8" cy="4" r="3.500" fill="#7aa0cf"/><circle cx="4" cy="7" r="3.500" fill="#b9cfe8"/></svg></span>
                <button class="s"><svg viewBox="0 0 12 11"><path d="M1 1h5l5 9H1z" fill="#eee"/><path d="M5 4h3v6H5z" fill="#27408c"/></svg>Stretch</button><button class="s"><svg viewBox="0 0 12 11"><path d="M1 1h10v9H1z" fill="#b9cfe8"/><path d="M2 5h5v4H2z" fill="#fff" stroke="#466d99"/></svg>Scale</button><button class="s"><svg viewBox="0 0 12 11"><path d="M0 0h5v5H0zM7 0h5v5H7zM0 6h5v5H0zM7 6h5v5H7z" fill="#9bbbe4"/></svg>Array<svg class="c ml-[2px]"><use href="#caret"/></svg></button><span class="s"><svg viewBox="0 0 12 11"><path d="M3 6l3-4 3 4M1 6h10v4H1z" fill="none" stroke="#7aa0cf"/></svg></span>
            </div>
            <p>Modify<svg><use href="#caret"/></svg></p>
        </div>
        <div class="w-[131px]">
            <div class="flex pt-[3px]">
                <button class="b w-[39px]"><svg viewBox="0 0 22 22"><path d="M2 21L11 1l9 20M5 14h12" fill="none" stroke="#eee" stroke-width="2.500"/></svg>Text</button>
                <button class="b w-[44px]"><svg viewBox="0 0 22 22"><path d="M1 1v20M21 1v20M1 3h20" stroke="#7aa0e0"/><path d="M5 17l3-4 3 4 3-4 3 4" fill="none" stroke="#e3a830" stroke-width="2"/></svg>Dimension</button>
                <div class="pl-[3px]">
                    <span class="s"><svg viewBox="0 0 12 11"><path d="M1 1v9M11 1v9M1 5h10" stroke="#7aa0cf"/></svg><svg class="c"><use href="#caret"/></svg></span>
                    <span class="s"><svg viewBox="0 0 12 11"><path d="M1 10L5 2h4" fill="none" stroke="#ccc"/></svg><svg class="c"><use href="#caret"/></svg></span>
                    <span class="s"><svg viewBox="0 0 12 11"><path d="M1 1h10v9H1z" fill="#eee"/><path d="M1 4h10M1 7h10M5 1v9" stroke="#999"/></svg>Table</span>
                </div>
            </div>
            <p>Annotation<svg><use href="#caret"/></svg></p>
        </div>
        <div class="w-[201px]">
            <div class="flex pt-[3px]">
                <button class="b w-[44px]"><svg viewBox="0 0 22 22"><path d="M1 4l7-3 7 3-6 4zM1 9l8 3 5-3M1 14l8 3 3-1" fill="#eee" stroke="#eee"/><path d="M12 10h9v11h-9z" fill="#fff" stroke="#666"/><path d="M14 14h5M14 17h5" stroke="#666"/></svg><span>Layer<br>Properties</span></button>
                <div class="flex-1">
                    <label class="flex items-center h-[16px] my-px mr-px bg-gradient-to-b from-[#6a6a6c] to-[#3f3f41] gap-[5px] px-[4px]"><svg class="w-[36px] h-[11px]" viewBox="0 0 36 11"><circle cx="4" cy="4" r="3.500" fill="#efe98c"/><path d="M3 8h2v3H3z" fill="#ccc"/><circle cx="18" cy="5" r="3" fill="#d8d273"/><path d="M28 5h7v5h-7z" fill="#d8d273"/><path d="M33 5V1h3" fill="none" stroke="#ccc"/></svg><i class="size-[10px] bg-white border border-black"></i><select aria-label="Layer" class="appearance-none flex-1 outline-none"><option>0</option></select><svg class="w-[5px] h-[4px]"><use href="#caret"/></svg></label>
                    <div class="s !gap-[6px] pl-[3px]"><svg><use href="#layer"/></svg><svg><use href="#layer"/></svg><svg><use href="#layer"/></svg><svg><use href="#layer"/></svg><svg><use href="#layer"/></svg><button>Make Current</button></div>
                    <div class="s !gap-[6px] pl-[3px]"><svg><use href="#layery"/></svg><svg><use href="#layer"/></svg><svg><use href="#layery"/></svg><svg><use href="#layery"/></svg><svg><use href="#layery"/></svg><button>Match Layer</button></div>
                </div>
            </div>
            <p class="!bg-[#828284]">Layers<svg><use href="#caret"/></svg></p>
        </div>
        <div class="w-[60px]">
            <div class="flex pt-[3px]">
                <button class="b w-[33px]"><svg viewBox="0 0 22 22"><path d="M12 1c5-1 8 1 9 4v12H10V3z" fill="#9bbbe4"/><path d="M1 7h12v9H1z" fill="#e6e9ee" stroke="#999"/><circle cx="15" cy="16" r="5" fill="#cfd8e6" stroke="#789"/></svg>Insert</button>
                <div><span class="s"><svg><use href="#layer"/></svg></span><span class="s"><svg><use href="#layery"/></svg></span><span class="s"><svg><use href="#layery"/></svg><svg class="c"><use href="#caret"/></svg></span></div>
            </div>
            <p>Block<svg><use href="#caret"/></svg></p>
        </div>
        <div class="w-[165px]">
            <div class="flex pt-[3px]">
                <button class="b w-[46px]"><svg viewBox="0 0 22 22"><path d="M1 1h15v20H1z" fill="#eef3f8"/><path d="M3 3h6v8H3z" fill="#2a66a8"/><path d="M3 14h10M3 17h8" stroke="#777"/><path d="M10 17c4-4 8-3 11-6v5l-7 6z" fill="#d9903a"/></svg><span>Match<br>Properties</span></button>
                <div class="w-[14px]"><span class="s"><svg viewBox="0 0 12 11"><path d="M6 5.500V0a5.500 5.500 0 0 1 5 8z" fill="#6c6"/><path d="M6 5.500l5 3a5.500 5.500 0 0 1-10 0z" fill="#66c"/><path d="M6 5.500L1 8A5.500 5.500 0 0 1 6 0z" fill="#d66"/></svg></span><span class="s"><svg viewBox="0 0 12 11"><path d="M0 1h12M0 5h12" stroke="#ccc"/><path d="M0 9h12" stroke="#ccc" stroke-width="3"/></svg></span><span class="s"><svg viewBox="0 0 12 11"><path d="M0 2h12M0 5h12M0 8h12" stroke="#aaa" stroke-dasharray="2 1"/></svg></span></div>
                <div class="flex-1 pr-[3px] [&>label]:flex [&>label]:items-center [&>label]:h-[16px] [&>label]:mt-px [&>label]:mb-[2px] [&>label]:bg-gradient-to-b [&>label]:from-[#68686a] [&>label]:to-[#3f3f41] [&>label]:px-[4px] [&_select]:appearance-none [&_select]:outline-none [&_select]:flex-1">
                    <label><i class="size-[11px] bg-white ml-[4px] mr-[10px]"></i><select aria-label="Color"><option>ByLayer</option></select><svg class="w-[5px] h-[4px]"><use href="#caret"/></svg></label>
                    <label><i class="w-[43px] h-px bg-[#ccc] mr-[4px]"></i><select aria-label="Lineweight"><option>ByLayer</option></select><svg class="w-[5px] h-[4px]"><use href="#caret"/></svg></label>
                    <label><i class="w-[43px] h-px bg-[#ccc] mr-[4px]"></i><select aria-label="Linetype"><option>ByLayer</option></select><svg class="w-[5px] h-[4px]"><use href="#caret"/></svg></label>
                </div>
            </div>
            <p>Properties<svg><use href="#caret"/></svg></p>
        </div>
        <div class="w-[52px]">
            <div class="flex pt-[3px]">
                <button class="b w-[31px]"><svg viewBox="0 0 22 22"><path d="M1 1h13v20H1z" fill="#444" stroke="#222"/><path d="M3 4h8v6H3z" fill="#b8cf5a"/><circle cx="7" cy="17" r="3.500" fill="#eee"/><path d="M15 1v14M8 8h14M10 3l10 10M20 3L10 13" stroke="#bfe0f5" stroke-width="1.500"/></svg>Group</button>
                <div><span class="s"><svg viewBox="0 0 12 11"><path d="M1 1h4v3H1zM1 7h4v3H1z" fill="#ddd"/><path d="M6 5l2 2 4-6" fill="none" stroke="#b8cf5a"/></svg></span><span class="s"><svg viewBox="0 0 12 11"><path d="M1 1h10v9H1z" fill="none" stroke="#99a" stroke-dasharray="2"/></svg></span><span class="s"><svg class="bg-[#4a7db8]" viewBox="0 0 12 11"><path d="M.5.500h11v10H.5z" fill="none" stroke="#a9cbee"/><path d="M3 3h2v5H3zM7 6h3v2H7z" fill="#dfeefc"/></svg></span></div>
            </div>
            <p>Groups<svg><use href="#caret"/></svg></p>
        </div>
        <div class="flex-1">
            <div class="flex justify-center pt-[3px]"><button class="b"><svg viewBox="0 0 22 22"><path d="M1 8h20M1 5v6M21 5v6" stroke="#ccc"/><path d="M0 14h22v5H0z" fill="#e0b23c"/></svg>Measure</button></div>
            <p>Utilities<svg><use href="#caret"/></svg></p>
        </div>
    </div>

    <div class="flex items-end h-[21px] shrink-0 bg-[#38383a] border-b-2 border-[#5c5c5e] pl-[14px]">
        <button class="w-[92px] h-[17px] bg-gradient-to-b from-[#5c5c5e] to-[#4a4a4c] rounded-t-lg text-left pl-[10px] text-[#9a9a9a]">Start</button>
        <button class="w-[92px] h-[17px] bg-gradient-to-b from-[#6d6d6f] to-[#858587] rounded-t-lg text-left pl-[8px] text-white">PLAN DK*</button>
        <button class="ml-[7px] size-[14px] mb-[2px] rounded-full bg-[#4c4c4e] text-[#ccc] leading-[12px]">+</button>
    </div>

    <div class="flex-1 min-h-0 relative">
        <p class="absolute left-[1px] top-[3px] text-[7px] text-white">[-][Top][2D Wireframe]</p>
        <svg class="block w-full" viewBox="1037 731 1011 421" fill="none">
            <g fill="#30333a">
                <path d="M1807.500 746H1842v21h-34.500zM1825 782h17v213h-34.500v-29H1780v-76h27v-13h-5v-40h-22v-9h45z"/>
                <path d="M1865 747h46v146h-39v73h-7z"/>
            </g>
            <path d="M1842 767h-48l-44 102M1842 781.500h-17M1776 837.500h26V877h5v13h-27M1780 966h27v6M1807 995.500h35M1911 893h-39v73h-7M1866.500 745v20" stroke="#151820" stroke-width="1.600"/>
            <path d="M1807.500 972H1842V744.700h22.700V1062H1842v-76h-34.500z" fill="#a9a300"/>
            <path d="M1911 744.700h30.500v272H1891V902h20V786h-20v-32h20z" fill="#686969"/>
            <g stroke="#c9ccd6">
                <path d="M1824 827.500h-497.400L1298 901l-4 60-6.600 137 138.200 12 36-25 80-55 38.500-18.300 36-7.700c20-4 44-7 67-7.300h41l55.600 1.300v-32.300"/>
                <path d="M1352 827.700L1321.400 905 1317 957l-5 119 121 11 80-50 36-14 44-17 23-2 59.600-35 34.400-3.300 41 32.300M1776 837v15"/>
                <path d="M1049 1139l4 5 4-5M1053 1144v8"/>
            </g>
        </svg>
    </div>
</section>
</div>
</main>

<!-- format labels -->
<div class="absolute left-[44px] top-[255px] w-[238px] h-[134px] bg-[#b9d78c] text-black font-bold text-[82px] leading-[134px] pl-[18px] font-['Lato',sans-serif] [-webkit-text-stroke:3px_black]">.CSV</div>
<div class="absolute left-[56px] top-[813px] w-[226px] h-[134px] bg-[#05fe82] text-black font-bold text-[82px] leading-[134px] pl-[18px] font-['Lato',sans-serif] [-webkit-text-stroke:3px_black]">.SAT</div>

<script>
    const F = 'Family Public Support', I = 'Inpatient Area', C = 'Clinic Support';
    const data = [
        ['Family Lounge', F, 48, 15, 3, '3..4..5..8'],
        ['Public Toilet', F, 2, 160, 1, '2..4..6..15'],
        ['Conference', F, 1, 225, 3, '3..2'],
        ['Patient Room', I, 26, 340, 10, '12..11.5..6..8'],
        ['Patient Room Isolation', I, 2, 340, 8, '2..3..5..7..8'],
        ['Patient Room VIP', I, 2, 340, 9, '1..3..2..4..5'],
        ['Alcove Charting Room', I, 16, 35, 8, '0..4..6'],
        ['Team Work station', C, 2, 288, 8, '7..4..3..5..8..9'],
        ['HUC Station', C, 1, 371, 7, '2..4..6'],
        ['Off stage Work Area', C, 2, 323, 3, '9..15..3'],
        ['Crash Cart Alcove', C, 3, 30, 4, '11..10..14..5'],
        ['Equipment Storage', C, 2, 320, 5, '4..6..7..9..11..13'],
        ['Clean Utility/ Supplies', C, 2, 200, 9, '2..3..5..7..8'],
        ['Soiled Utility', C, 1, 300, 7, '1..3..2..4..5'],
        ['Chute Room', C, 1, 150, 2, '0..4..6'],
        ['EVS Closet', C, 1, 80, 7, '7..4..3..5..8..9'],
        ['Nourishment Room Patient', C, 1, 120, 8, '2..4..6'],
        ['Nourishment Room Family', C, 1, 40, 5, '2..4..6..15'],
        ['Medication Room', C, 3, 150, 6, '3..2'],
        ['Alcove Portable Med Equip', C, 2, 40, 7, '12..11.5..6..8'],
        ['Unit Specific Storage Space', C, 1, 300, 6, '2..3..5..7..8'],
        ['Respiratory Therapy Workroom', C, 1, 120, 5, '1..3..2..4..5']
    ];
    const head = '<th class="border-r border-b border-[#b5b5b5] p-0"><svg class="w-[13px] h-[13px] ml-auto" viewBox="0 0 13 13"><path d="M12 1v11H1z" fill="#ddd"/></svg></th>';
    document.getElementById('letters').innerHTML = head + [...'ABCDEFGHIJKLMN'].map(l =>
        `<th class="border-r border-r-[#e8e4ea] border-b border-b-[#b5a9b8] font-normal text-[#555] p-0 pt-[4px]">${l}</th>`).join('');

    function cell(v, span) {
        const side = typeof v === 'number' ? 'text-right pr-[2px]' : 'pl-[3px]';
        return `<td colspan="${span || 1}" class="border-r border-b border-[#dcd6de] p-0 pt-[3px] ${side}">${v}</td>`;
    }
    function row(n, list) {
        const adj = list[6];
        const wide = adj.length > 11;
        let html = `<th class="border-r border-r-[#b5a9b8] border-b border-b-[#dcd6de] font-normal text-[#555] p-0 pt-[3px]">${n}</th>`;
        html += list.slice(0, 6).map(v => cell(v)).join('') + cell(adj, wide ? 2 : 1);
        for (let i = 0; i < (wide ? 6 : 7); i++) html += cell('');
        return `<tr>${html}</tr>`;
    }
    document.getElementById('rows').innerHTML =
        row(1, ['PROGRAM ID', 'PROGRAM NAME', 'ZONE/ DEPARTMENT', 'QUANTITY', 'AREA', 'PREFERENCE VALUE', 'ADJACENT PROGRAMS']) +
        data.map((d, i) => row(i + 2, [i, ...d])).join('');
</script>
</body>
</html>
